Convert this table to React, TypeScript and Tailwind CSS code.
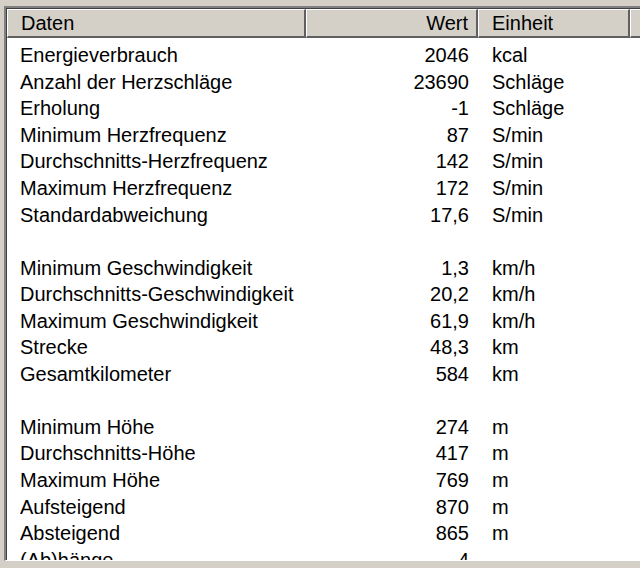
const rows: ([string, string, string] | null)[] = [
  ['Energieverbrauch', '2046', 'kcal'],
  ['Anzahl der Herzschläge', '23690', 'Schläge'],
  ['Erholung', '-1', 'Schläge'],
  ['Minimum Herzfrequenz', '87', 'S/min'],
  ['Durchschnitts-Herzfrequenz', '142', 'S/min'],
  ['Maximum Herzfrequenz', '172', 'S/min'],
  ['Standardabweichung', '17,6', 'S/min'],
  null,
  ['Minimum Geschwindigkeit', '1,3', 'km/h'],
  ['Durchschnitts-Geschwindigkeit', '20,2', 'km/h'],
  ['Maximum Geschwindigkeit', '61,9', 'km/h'],
  ['Strecke', '48,3', 'km'],
  ['Gesamtkilometer', '584', 'km'],
  null,
  ['Minimum Höhe', '274', 'm'],
  ['Durchschnitts-Höhe', '417', 'm'],
  ['Maximum Höhe', '769', 'm'],
  ['Aufsteigend', '870', 'm'],
  ['Absteigend', '865', 'm'],
  ['(Ab)hänge', '4', ''],
];

const headerCell =
  'h-full bg-[#d4d0c8] border-t border-l border-t-white border-l-white border-r-2 border-b-2 border-r-[#606060] border-b-[#606060] flex items-center';

export default function App() {
  return (
    <div
      className="w-[640px] h-[568px] bg-[#d4d0c8] overflow-hidden flex flex-col pt-[6px] pl-[4px] text-black text-[20px] leading-none"
      style={{ fontFamily: '"Liberation Sans", Arial, sans-serif' }}
    >
      <div className="flex-1 min-h-0 border-t-2 border-l-2 border-t-[#808080] border-l-[#808080] border-b border-b-white flex flex-col">
        <div className="flex-1 min-h-0 border-t border-l border-t-[#404040] border-l-[#404040] bg-white flex flex-col overflow-hidden">
          <div className="flex h-[29px] shrink-0 w-[700px]">
            <div className={`${headerCell} w-[299px] pl-[13px]`}>Daten</div>
            <div className={`${headerCell} w-[172px] justify-end pr-[8px]`}>Wert</div>
            <div className={`${headerCell} w-[152px] pl-[13px]`}>Einheit</div>
            <div className={`${headerCell} flex-1`}></div>
          </div>
          <div className="pt-[4px] flex-1 min-h-0 overflow-hidden">
            {rows.map((r, i) => (
              <div key={i} className="flex h-[26.56px] items-center">
                {r && (
                  <>
                    <div className="w-[299px] pl-[13px] whitespace-nowrap">{r[0]}</div>
                    <div className="w-[172px] text-right pr-[9px]">{r[1]}</div>
                    <div className="pl-[14px]">{r[2]}</div>
                  </>
                )}
              </div>
            ))}
          </div>
        </div>
      </div>
      <div className="h-[7px] shrink-0"></div>
    </div>
  );
}
